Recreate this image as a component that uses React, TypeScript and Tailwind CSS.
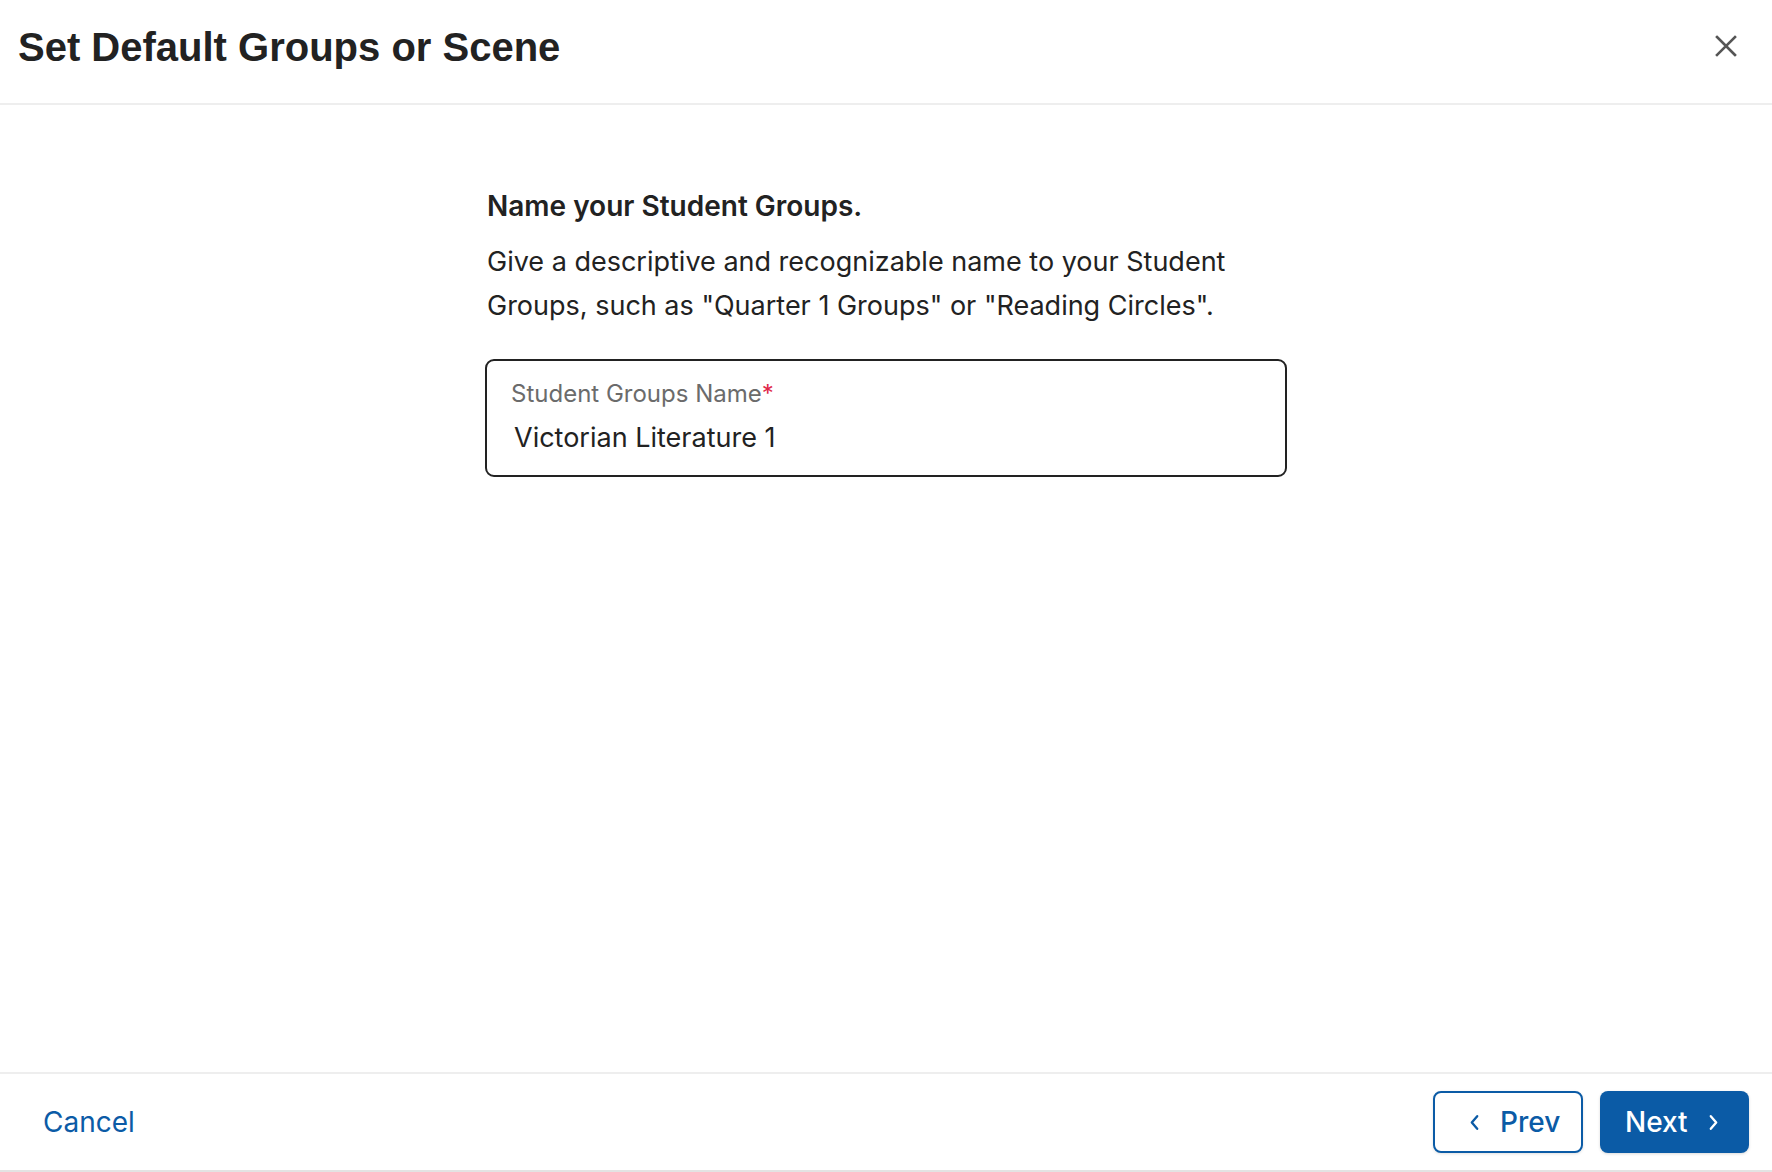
const inter = { fontFamily: "Inter, 'Noto Sans', sans-serif" };

function ChevronLeft({ className }: { className?: string }) {
  return (
    <svg viewBox="0 0 10 18" className={className} fill="none" stroke="currentColor" strokeWidth="2.6" strokeLinecap="round" strokeLinejoin="round">
      <path d="M8 2 L2 9 L8 16" />
    </svg>
  );
}

function ChevronRight({ className }: { className?: string }) {
  return (
    <svg viewBox="0 0 10 18" className={className} fill="none" stroke="currentColor" strokeWidth="2.6" strokeLinecap="round" strokeLinejoin="round">
      <path d="M2 2 L8 9 L2 16" />
    </svg>
  );
}

export default function App() {
  return (
    <div className="flex h-screen w-full flex-col bg-white text-[#222]" style={inter}>
      {/* Header */}
      <header className="flex h-[105px] shrink-0 items-start justify-between border-b-2 border-[#eeeeee] pl-[18px] pr-[35px] pt-[23px]">
        <h1 className="text-[40px] font-bold leading-[48px] text-[#222]" style={{ fontFamily: "'Liberation Sans', Arial, sans-serif" }}>
          Set Default Groups or Scene
        </h1>
        <button type="button" aria-label="Close" className="mt-[12px] flex h-[22px] w-[22px] items-center justify-center text-[#555]">
          <svg viewBox="0 0 22 22" className="h-[22px] w-[22px]" stroke="currentColor" strokeWidth="2.6" strokeLinecap="square">
            <path d="M2 2 L20 20 M20 2 L2 20" />
          </svg>
        </button>
      </header>

      {/* Body */}
      <main className="flex-1 pt-[84px]">
        <div className="mx-auto w-[802px]">
          <h2 className="pl-[2px] text-[28px] font-semibold leading-[34px] text-[#222]">Name your Student Groups.</h2>
          <p className="mt-[17px] pl-[2px] text-[27px] leading-[44px] text-[#222]">
            Give a descriptive and recognizable name to your Student Groups, such as "Quarter 1 Groups" or "Reading Circles".
          </p>

          <div className="mt-[31px] h-[118px] rounded-[9px] border-2 border-[#222] pl-[24px] pt-[18px]">
            <label className="block text-[24px] leading-[29px] text-[#6b6b6b]">
              Student Groups Name<span className="text-[#e0284a]">*</span>
            </label>
            <div className="mt-[13px] pl-[3px] text-[27px] leading-[33px] text-[#222]">Victorian Literature 1</div>
          </div>
        </div>
      </main>

      {/* Footer */}
      <footer className="flex h-[100px] shrink-0 items-center justify-between border-t-2 border-b-2 border-t-[#eeeeee] border-b-[#e3e3e3] pl-[43px] pr-[23px]">
        <button type="button" className="text-[28px] leading-[34px] text-[#0b5ba6]">Cancel</button>
        <div className="flex items-center gap-[17px]">
          <button
            type="button"
            className="flex h-[62px] w-[150px] items-center rounded-[8px] border-2 border-[#0b5ba6] bg-white pl-[35px] text-[28px] font-medium text-[#0b5ba6] shadow-[0_1px_3px_rgba(0,0,0,0.12)]"
          >
            <ChevronLeft className="h-[17px] w-[9px]" />
            <span className="ml-[21px]">Prev</span>
          </button>
          <button
            type="button"
            className="flex h-[62px] w-[149px] items-center rounded-[8px] bg-[#0b5ba6] pl-[25px] text-[28px] font-medium text-white shadow-[0_1px_3px_rgba(0,0,0,0.15)]"
          >
            <span>Next</span>
            <ChevronRight className="ml-[21px] h-[17px] w-[9px]" />
          </button>
        </div>
      </footer>
    </div>
  );
}
